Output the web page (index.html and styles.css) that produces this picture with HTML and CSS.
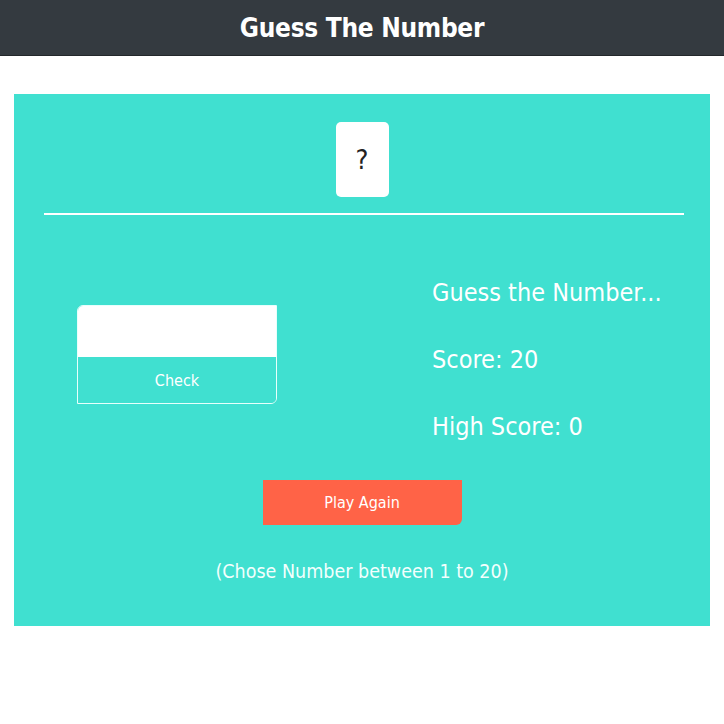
FILE: index.html
```html
<!DOCTYPE html>
<html>
<head>
<meta charset="utf-8">
<link rel="stylesheet" href="styles.css">
</head>
<body>
<header class="topbar"><h1 class="title">Guess The Number</h1></header>
<main class="panel">
  <div class="secret-wrap"><div class="secret">?</div></div>
  <hr class="divider">
  <div class="play-row">
    <div class="guess-box">
      <input class="guess-input" type="text">
      <button class="check-btn">Check</button>
    </div>
    <div class="stats">
      <p class="stat">Guess the Number...</p>
      <p class="stat">Score: 20</p>
      <p class="stat">High Score: 0</p>
    </div>
  </div>
  <div class="again-wrap"><button class="again-btn">Play Again</button></div>
  <p class="hint">(Chose Number between 1 to 20)</p>
</main>
</body>
</html>
```
FILE: styles.css
```css
* { box-sizing: border-box; }
body {
  margin: 0;
  font-family: "DejaVu Sans Condensed", "Open Sans", sans-serif;
  background: #fff;
}
.topbar {
  background: #343a40;
  height: 56px;
  border-bottom: 1px solid #23272b;
  display: flex;
  align-items: center;
  justify-content: center;
}
.title {
  margin: 0;
  color: #fff;
  font-size: 26px;
  font-weight: 600;
  letter-spacing: -0.3px;
}
.panel {
  margin: 38px 14px 0;
  background: #40e0d0;
  height: 532px;
  padding-top: 28px;
}
.secret-wrap { display: flex; justify-content: center; }
.secret {
  width: 53px;
  height: 75px;
  background: #fff;
  border-radius: 5px;
  display: flex;
  align-items: center;
  justify-content: center;
  font-size: 27px;
  color: #222;
}
.divider {
  margin: 16px 26px 0 30px;
  border: 0;
  height: 2px;
  background: #fff;
}
.play-row {
  display: flex;
  align-items: flex-start;
  margin-top: 44px;
}
.guess-box {
  margin: 46px 0 0 63px;
  width: 200px;
  border: 1px solid #e8fffc;
  border-radius: 6px 0 6px 0;
  overflow: hidden;
  display: flex;
  flex-direction: column;
}
.guess-input {
  height: 51px;
  border: 0;
  background: #fff;
  outline: none;
}
.check-btn {
  height: 46px;
  border: 0;
  background: #40e0d0;
  color: #fff;
  font-family: inherit;
  font-size: 16px;
}
.stats { margin-left: 155px; }
.stat {
  margin: 0;
  color: #fff;
  font-size: 25px;
  line-height: 67px;
}
.again-wrap { display: flex; justify-content: center; margin-top: 20px; }
.again-btn {
  width: 199px;
  height: 45px;
  border: 0;
  background: #ff6347;
  color: #fff;
  font-family: inherit;
  font-size: 16px;
  border-radius: 0 0 6px 0;
}
.hint {
  margin: 35px 0 0;
  text-align: center;
  color: #f2fffd;
  font-size: 19.5px;
}
```
